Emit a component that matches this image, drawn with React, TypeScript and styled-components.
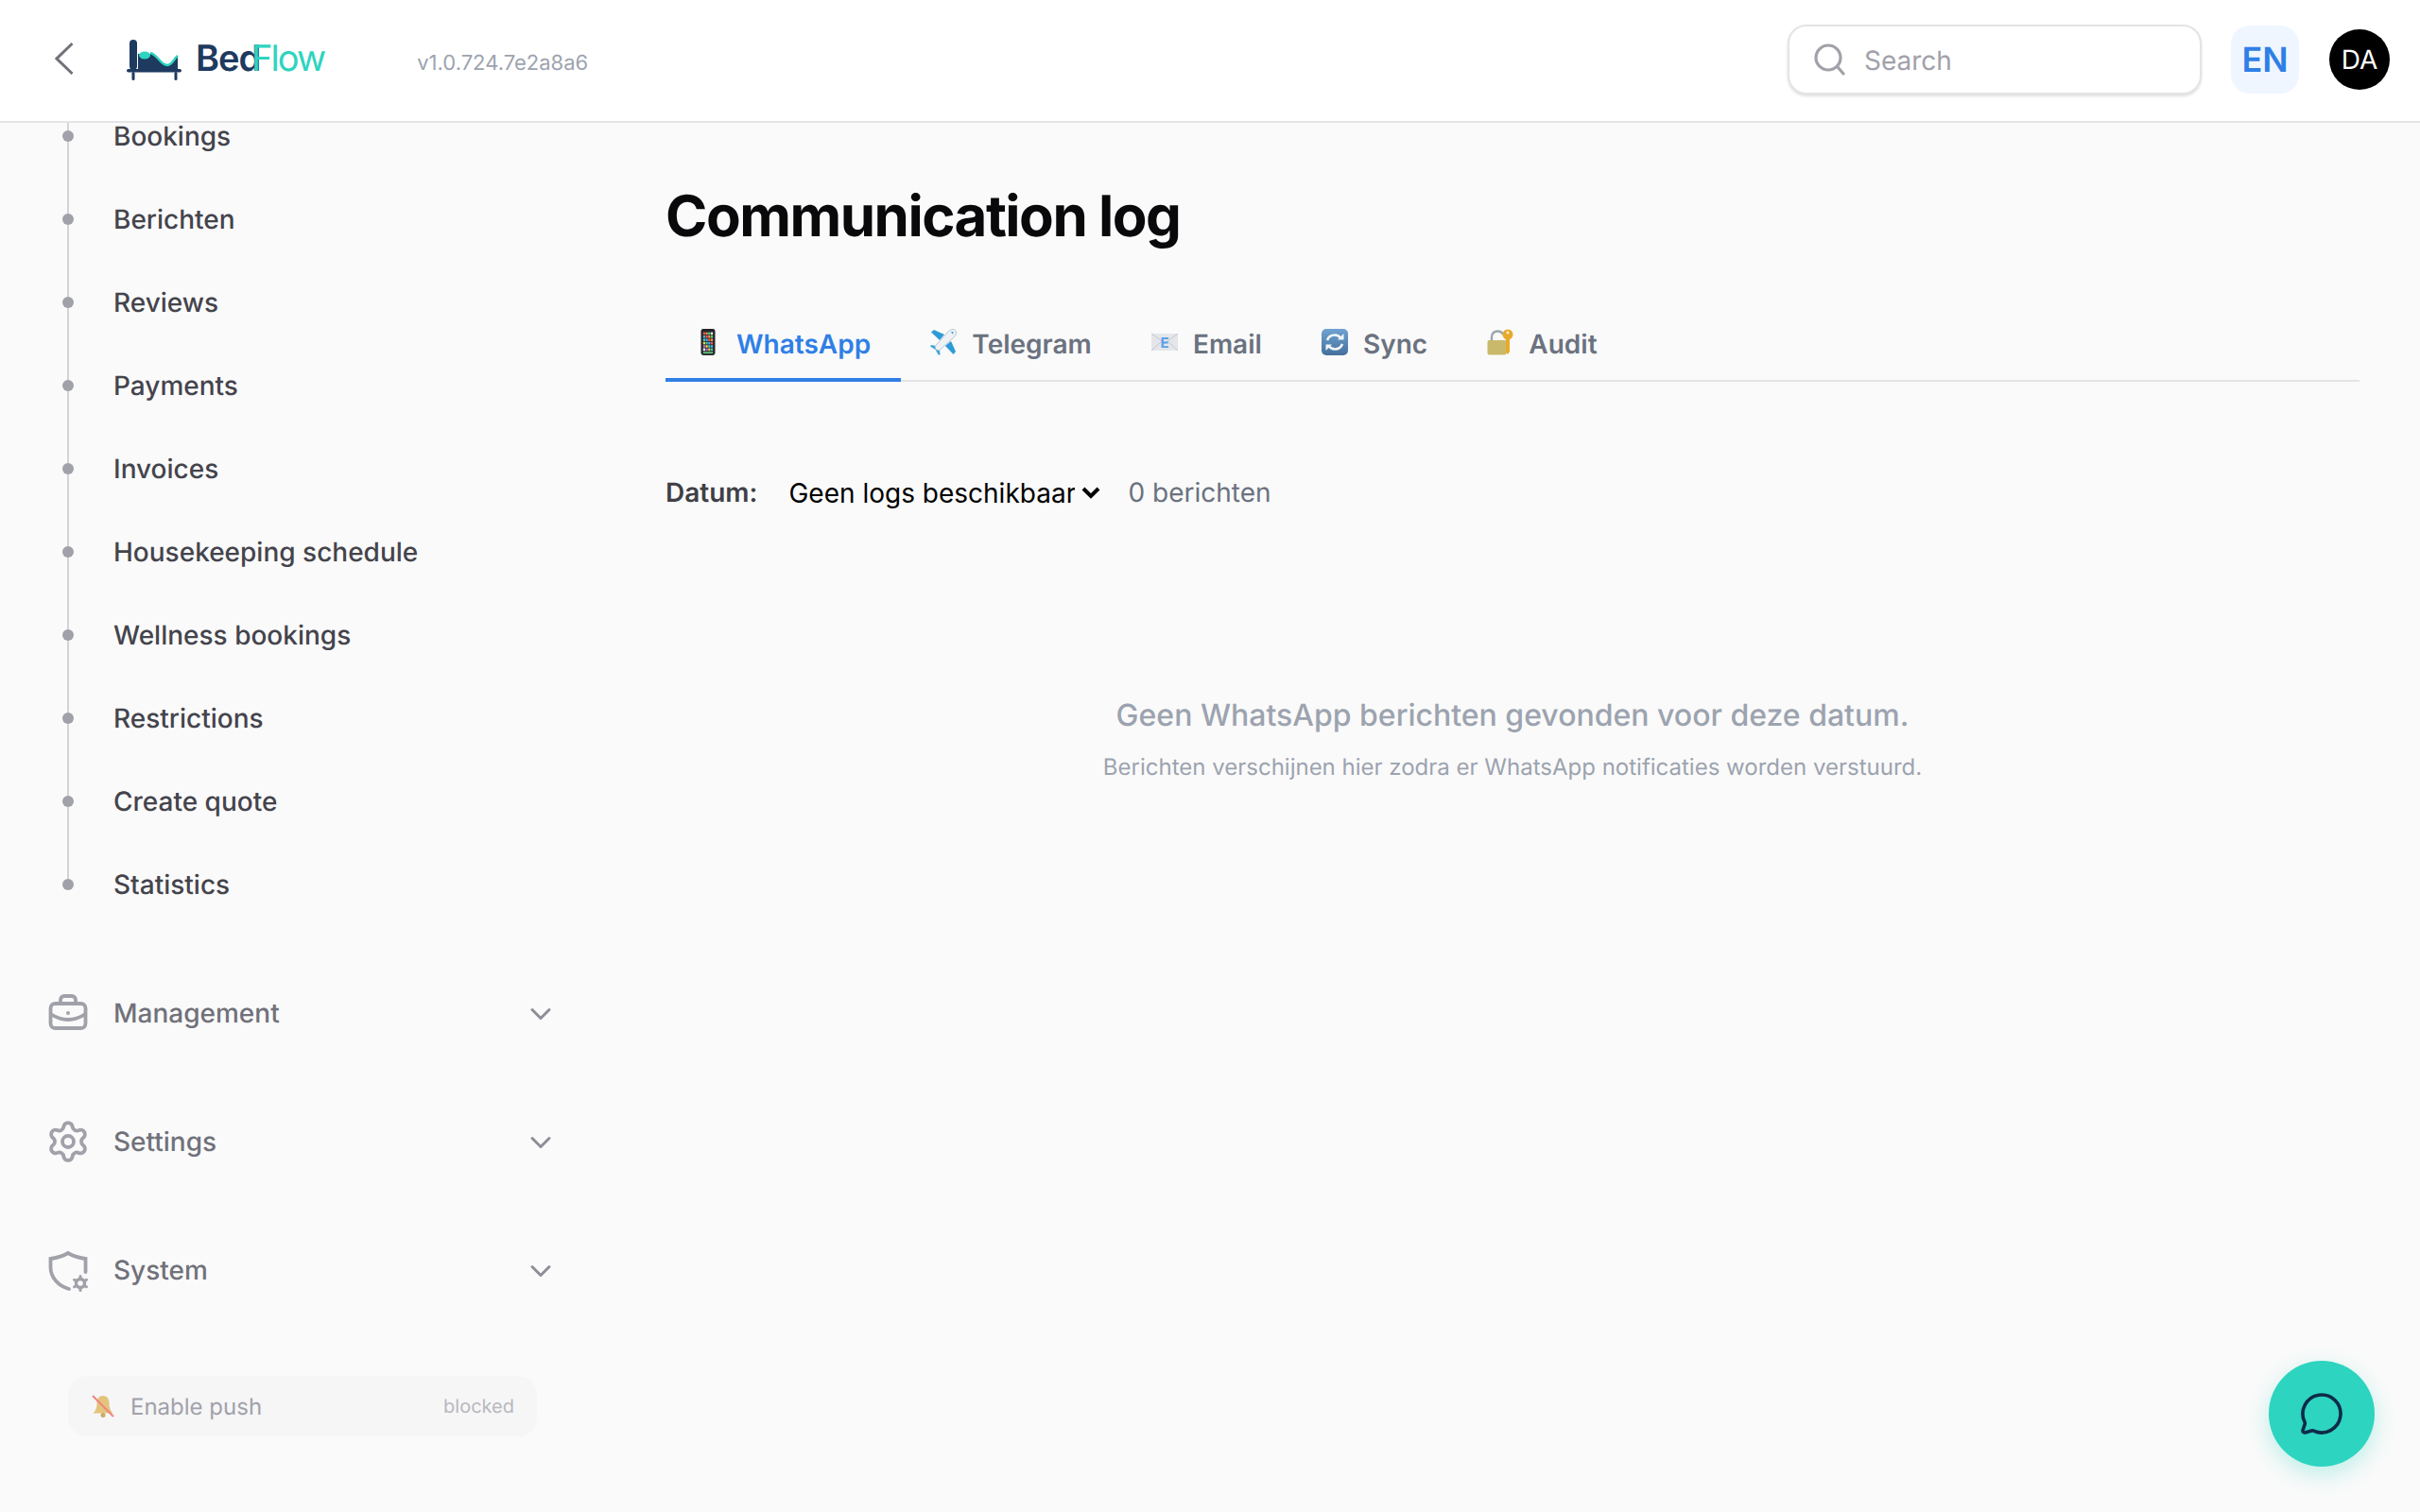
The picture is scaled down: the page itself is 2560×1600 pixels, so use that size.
import { ReactNode } from 'react'
import styled, { createGlobalStyle } from 'styled-components'
import { ChevronDown, MessageCircle, Settings } from 'lucide-react'

const GlobalStyle = createGlobalStyle`
  html, body {
    margin: 0;
    padding: 0;
    height: 1600px;
    overflow: hidden;
    background: #fafafa;
  }
  * {
    box-sizing: border-box;
  }
`

const Page = styled.div`
  width: 2560px;
  height: 1600px;
  display: flex;
  flex-direction: column;
  font-family: Inter, "Liberation Sans", sans-serif;
  text-rendering: geometricPrecision;
  background: #fafafa;
  overflow: hidden;
`

const Header = styled.header`
  height: 130px;
  flex-shrink: 0;
  display: flex;
  align-items: center;
  padding: 0 32px 2px 58px;
  background: #fff;
  border-bottom: 2px solid #e4e4e7;
  position: relative;
  z-index: 2;
`

const BackButton = styled.svg`
  width: 20px;
  height: 36px;
  margin-top: -2px;
  flex-shrink: 0;
`

const LogoMark = styled.svg`
  width: 58px;
  height: 43px;
  margin-left: 56px;
  margin-top: 1px;
  flex-shrink: 0;
`

const LogoText = styled.div`
  display: flex;
  margin-left: 15px;
  font-size: 38px;
  line-height: 44px;
  margin-top: -2px;
`

const LogoBed = styled.span`
  color: #1e3a5f;
  font-weight: 600;
  letter-spacing: -1px;
  width: 59px;
  overflow: visible;
`

const LogoFlow = styled.span`
  color: #2dd4bf;
  font-weight: 400;
  letter-spacing: -1.9px;
`

const Version = styled.span`
  margin-left: 98px;
  margin-top: 7px;
  font-size: 22px;
  color: #9ca3af;
`

const HeaderRight = styled.div`
  margin-left: auto;
  display: flex;
  align-items: center;
`

const SearchBox = styled.div`
  width: 438px;
  height: 74px;
  display: flex;
  align-items: center;
  gap: 19px;
  padding-left: 26px;
  background: #fff;
  border: 2px solid #e4e4e7;
  border-radius: 20px;
  box-shadow: 0 2px 3px rgba(0, 0, 0, 0.12);
`

const SearchIcon = styled.svg`
  width: 34px;
  height: 34px;
  flex-shrink: 0;
`

const SearchText = styled.span`
  font-size: 28px;
  color: #a1a1aa;
  margin-top: 1px;
`

const LangButton = styled.div`
  width: 72px;
  height: 72px;
  margin-left: 31px;
  display: flex;
  align-items: center;
  justify-content: center;
  border-radius: 20px;
  background: #eff6ff;
  color: #2f7fe6;
  font-size: 36px;
  font-weight: 600;
`

const Avatar = styled.div`
  width: 64px;
  height: 64px;
  margin-left: 32px;
  display: flex;
  align-items: center;
  justify-content: center;
  border-radius: 50%;
  background: #000;
  color: #fff;
  font-size: 28px;
`

const Body = styled.div`
  flex: 1;
  display: flex;
  min-height: 0;
`

const Sidebar = styled.aside`
  width: 640px;
  flex-shrink: 0;
  overflow: hidden;
`

const SubList = styled.div`
  margin-top: -30px;
  margin-bottom: 24px;
`

const SubItem = styled.div`
  height: 88px;
  display: flex;
  align-items: center;
  padding-left: 120px;
  position: relative;
  font-size: 28px;
  font-weight: 500;
  color: #44444c;

  &::before {
    content: '';
    position: absolute;
    left: 71px;
    top: 0;
    width: 2px;
    height: 100%;
    background: #d4d4d8;
  }

  &:last-child::before {
    height: 50%;
  }

  &::after {
    content: '';
    position: absolute;
    left: 66px;
    top: 38px;
    width: 12px;
    height: 12px;
    border-radius: 50%;
    background: #a1a1aa;
  }
`

const GroupRow = styled.div`
  height: 136px;
  display: flex;
  align-items: center;
  padding: 0 50px 0 48px;
  font-size: 28px;
  font-weight: 500;
  color: #71717a;
`

const GroupIcon = styled.span`
  width: 48px;
  height: 48px;
  display: flex;
  color: #a1a1aa;
  flex-shrink: 0;
`

const GroupLabel = styled.span`
  margin-left: 24px;
  flex: 1;
`

const GroupChevron = styled(ChevronDown)`
  margin-top: 2px;
  flex-shrink: 0;
`

const PushButton = styled.div`
  width: 496px;
  height: 64px;
  margin: 44px 0 0 72px;
  display: flex;
  align-items: center;
  padding: 0 24px;
  border-radius: 20px;
  background: #f6f6f7;
`

const PushLabel = styled.span`
  margin-left: 16px;
  font-size: 24px;
  color: #a1a1aa;
  flex: 1;
`

const PushState = styled.span`
  font-size: 20px;
  color: #b8b8be;
`

const Main = styled.main`
  flex: 1;
  padding: 63px 64px 0;
  min-width: 0;
`

const Title = styled.h1`
  margin: 0;
  font-size: 60px;
  line-height: 72px;
  font-weight: 700;
  letter-spacing: -1.5px;
  color: #09090b;
`

const Tabs = styled.div`
  margin-top: 59px;
  display: flex;
  border-bottom: 2px solid #e4e4e7;
`

const Tab = styled.div<{ $active?: boolean }>`
  height: 80px;
  margin-bottom: -2px;
  padding: 3px 32.2px 0 31px;
  display: flex;
  align-items: center;
  gap: 16px;
  font-size: 28px;
  font-weight: 600;
  color: ${props => (props.$active ? '#2f7fe6' : '#6b7280')};
  border-bottom: 4px solid ${props => (props.$active ? '#2f7fe6' : 'transparent')};
`

const TabIcon = styled.svg`
  width: 28px;
  height: 28px;
  margin-top: -3px;
  flex-shrink: 0;
`

const FilterRow = styled.div`
  margin-top: 95px;
  height: 44px;
  display: flex;
  align-items: center;
`

const FilterLabel = styled.label`
  font-size: 28px;
  font-weight: 600;
  color: #3f3f46;
`

const DateSelect = styled.select`
  appearance: none;
  border: none;
  background: transparent;
  margin: 2px 0 0 33px;
  padding: 0;
  width: 303px;
  font-family: inherit;
  font-size: 28px;
  color: #000;
`

const SelectArrow = styled.svg`
  width: 20px;
  height: 14px;
  margin-left: 7px;
  flex-shrink: 0;
`

const MessageCount = styled.span`
  margin-left: 29px;
  font-size: 28px;
  color: #6b7280;
`

const EmptyTitle = styled.div`
  margin-top: 190px;
  text-align: center;
  font-size: 32px;
  line-height: 48px;
  font-weight: 500;
  color: #9ca3af;
`

const EmptyText = styled.div`
  margin-top: 13px;
  text-align: center;
  font-size: 24px;
  line-height: 36px;
  color: #9ca3af;
`

const ChatButton = styled.button`
  position: fixed;
  left: 2400px;
  top: 1440px;
  width: 112px;
  height: 112px;
  border: none;
  padding: 0;
  display: flex;
  align-items: center;
  justify-content: center;
  border-radius: 50%;
  background: #2dd4bf;
  color: #0f2a4a;
  box-shadow: 0 8px 24px rgba(45, 212, 191, 0.3);
  z-index: 3;
`

const subItems = [
  'Bookings',
  'Berichten',
  'Reviews',
  'Payments',
  'Invoices',
  'Housekeeping schedule',
  'Wellness bookings',
  'Restrictions',
  'Create quote',
  'Statistics',
]

const phoneColors = ['#ef5a4c', '#f7d348', '#4ed47f', '#4aa8ee', '#b06ad0', '#f2934a', '#36cdb4', '#f4f6f8']

function BedLogo() {
  return (
    <LogoMark viewBox="0 0 58 43">
      <rect x="3" y="0" width="8" height="32" rx="4" fill="#1e3a5f" />
      <path d="M12 15H54V31H12Z" fill="#1e3a5f" />
      <path d="M24 10H54V16.5C50 19 48 26 43 26C36 26 33 17 24 14Z" fill="#fff" />
      <ellipse cx="19" cy="16.5" rx="6" ry="4" fill="#2dd4bf" />
      <path d="M25 14C33 16 36 27 43 27C48 27 50 20 54 17" fill="none" stroke="#2dd4bf" strokeWidth="2.4" />
      <rect x="0" y="31" width="58" height="3.4" rx="1.7" fill="#1e3a5f" />
      <rect x="5.5" y="34" width="3" height="9" rx="1.5" fill="#1e3a5f" />
      <rect x="50.5" y="34" width="3" height="9" rx="1.5" fill="#1e3a5f" />
    </LogoMark>
  )
}

function PhoneEmoji() {
  const cells: ReactNode[] = []
  for (let row = 0; row < 6; row++) {
    for (let col = 0; col < 4; col++) {
      cells.push(
        <rect
          key={`${row}-${col}`}
          x={8.8 + col * 2.7}
          y={3.6 + row * 3.4}
          width="2.2"
          height="2.6"
          fill={phoneColors[(row * 3 + col * 5) % phoneColors.length]}
        />,
      )
    }
  }
  return (
    <TabIcon viewBox="0 0 28 28">
      <rect x="6.5" y="0" width="15" height="28" rx="2.4" fill="#26262a" />
      {cells}
      <rect x="8.8" y="24.2" width="10.4" height="2" fill="#5fb878" />
    </TabIcon>
  )
}

function PlaneEmoji() {
  return (
    <TabIcon viewBox="0 0 28 28">
      <path d="M15 6L4 1 1 3.500 10 12Z" fill="#2f9bd6" />
      <path d="M22 13L27 24 24.500 27 16 18Z" fill="#2f9bd6" />
      <path d="M6 18L1 17 0 18.500 5.500 22 9 28 10.500 27 10 22Z" fill="#3aa5db" />
      <path d="M26.500 1.500C24.500-.5 21.500.5 19 3L5 18.500 6 22 9.500 23 25 9C27.500 6.500 28.500 3.500 26.500 1.500Z" fill="#eef2f5" stroke="#9fb0bf" strokeWidth=".7" />
      <path d="M24.500 3L21.800 3.200 24.200 5.800Z" fill="#2f9bd6" />
    </TabIcon>
  )
}

function MailEmoji() {
  return (
    <TabIcon viewBox="0 0 28 28">
      <rect x="0" y="5" width="28" height="18" fill="#e4e6ea" />
      <path d="M0 5L14 15 28 5M0 23L11 13M28 23L17 13" fill="none" stroke="#c3c7cd" strokeWidth="1" />
      <text x="14" y="20" textAnchor="middle" fontSize="15" fontWeight="700" fill="#5aa2ea" fontFamily="Inter, sans-serif">E</text>
    </TabIcon>
  )
}

function SyncEmoji() {
  return (
    <TabIcon viewBox="0 0 28 28">
      <defs>
        <linearGradient id="syncFill" x1="0" y1="0" x2="0" y2="1">
          <stop offset="0" stopColor="#6fa3d2" />
          <stop offset="1" stopColor="#44709c" />
        </linearGradient>
      </defs>
      <rect x="0" y="0" width="28" height="28" rx="5" fill="url(#syncFill)" />
      <path d="M6 12C7.500 8 10.500 6.500 14 6.500C17 6.500 19 8 20.500 10" fill="none" stroke="#f2f5f8" strokeWidth="2.6" />
      <path d="M17 11.500H23.500V5Z" fill="#f2f5f8" />
      <path d="M22 16C20.500 20 17.500 21.500 14 21.500C11 21.500 9 20 7.500 18" fill="none" stroke="#f2f5f8" strokeWidth="2.6" />
      <path d="M11 16.500H4.500V23Z" fill="#f2f5f8" />
    </TabIcon>
  )
}

function LockEmoji() {
  return (
    <TabIcon viewBox="0 0 28 28">
      <path d="M5 13V8.500C5 4.500 8 2.500 11 2.500C14 2.500 16 3.500 17 6" fill="none" stroke="#9aa4ad" strokeWidth="2.4" />
      <rect x="0.500" y="12" width="20" height="15.500" rx="2" fill="#c9b96a" />
      <circle cx="22" cy="6" r="5.500" fill="#e9a92c" />
      <circle cx="22" cy="4" r="1.400" fill="#fbf4dc" />
      <path d="M20 10H24V24L22 27 20 25Z" fill="#e9a92c" />
    </TabIcon>
  )
}

function BellEmoji() {
  return (
    <svg width="26" height="26" viewBox="0 0 26 26">
      <g opacity="0.7">
        <path d="M13 2C8 2 6.500 6 6.500 10C6.500 15 5 18 2.500 20.500H23.500C21 18 19.500 15 19.500 10C19.500 6 18 2 13 2Z" fill="#dbb04a" />
        <circle cx="13" cy="22.500" r="2.500" fill="#b98a2c" />
        <path d="M2 2L24 24" stroke="#ef5350" strokeWidth="2" />
      </g>
    </svg>
  )
}

function BriefcaseIcon() {
  return (
    <svg width="48" height="48" viewBox="0 0 48 48" fill="none" stroke="currentColor" strokeWidth="3.8">
      <rect x="5.500" y="14" width="37" height="26" rx="5" />
      <path d="M16 14V10A4 4 0 0 1 20 6H28A4 4 0 0 1 32 10V14" />
      <path d="M5.500 25Q24 37 42.500 25" />
      <circle cx="24" cy="24" r="2" fill="currentColor" stroke="none" />
    </svg>
  )
}

function ShieldGearIcon() {
  const teeth = [0, 60, 120, 180, 240, 300]
  return (
    <svg width="48" height="48" viewBox="0 0 48 48" fill="none" stroke="currentColor" strokeWidth="3.8" strokeLinecap="round">
      <path d="M42.500 26V12C36 11 29 9 24 6C19 9 12 11 5.500 12V21C5.500 32 14 41 25 44" />
      <circle cx="37" cy="38" r="4.500" strokeWidth="3.400" />
      {teeth.map(angle => (
        <path key={angle} d="M37 30.500V32.500" strokeWidth="3" transform={`rotate(${angle} 37 38)`} />
      ))}
    </svg>
  )
}

const tabs = [
  { label: 'WhatsApp', icon: <PhoneEmoji />, active: true },
  { label: 'Telegram', icon: <PlaneEmoji /> },
  { label: 'Email', icon: <MailEmoji /> },
  { label: 'Sync', icon: <SyncEmoji /> },
  { label: 'Audit', icon: <LockEmoji /> },
]

const groups = [
  { label: 'Management', icon: <BriefcaseIcon /> },
  { label: 'Settings', icon: <Settings size={48} strokeWidth={1.9} /> },
  { label: 'System', icon: <ShieldGearIcon /> },
]

export default function App() {
  return (
    <Page>
      <GlobalStyle />
      <Header>
        <BackButton viewBox="0 0 20 36" fill="none" stroke="#71717a" strokeWidth="3">
          <path d="M18.500 2L2 18L18.500 34" />
        </BackButton>
        <BedLogo />
        <LogoText>
          <LogoBed>Bed</LogoBed>
          <LogoFlow>Flow</LogoFlow>
        </LogoText>
        <Version>v1.0.724.7e2a8a6</Version>
        <HeaderRight>
          <SearchBox>
            <SearchIcon viewBox="0 0 34 34" fill="none" stroke="#a1a1aa" strokeWidth="3.200" strokeLinecap="round">
              <circle cx="15" cy="15" r="13" />
              <path d="M25 25L31 32" />
            </SearchIcon>
            <SearchText>Search</SearchText>
          </SearchBox>
          <LangButton>EN</LangButton>
          <Avatar>DA</Avatar>
        </HeaderRight>
      </Header>
      <Body>
        <Sidebar>
          <SubList>
            {subItems.map(item => (
              <SubItem key={item}>{item}</SubItem>
            ))}
          </SubList>
          {groups.map(group => (
            <GroupRow key={group.label}>
              <GroupIcon>{group.icon}</GroupIcon>
              <GroupLabel>{group.label}</GroupLabel>
              <GroupChevron size={36} strokeWidth={2} color="#8e8e96" />
            </GroupRow>
          ))}
          <PushButton>
            <BellEmoji />
            <PushLabel>Enable push</PushLabel>
            <PushState>blocked</PushState>
          </PushButton>
        </Sidebar>
        <Main>
          <Title>Communication log</Title>
          <Tabs>
            {tabs.map(tab => (
              <Tab key={tab.label} $active={tab.active}>
                {tab.icon}
                {tab.label}
              </Tab>
            ))}
          </Tabs>
          <FilterRow>
            <FilterLabel>Datum:</FilterLabel>
            <DateSelect defaultValue="">
              <option value="">Geen logs beschikbaar</option>
            </DateSelect>
            <SelectArrow viewBox="0 0 20 14" fill="none" stroke="#000" strokeWidth="4">
              <path d="M2 3L10 11L18 3" />
            </SelectArrow>
            <MessageCount>0 berichten</MessageCount>
          </FilterRow>
          <EmptyTitle>Geen WhatsApp berichten gevonden voor deze datum.</EmptyTitle>
          <EmptyText>Berichten verschijnen hier zodra er WhatsApp notificaties worden verstuurd.</EmptyText>
        </Main>
      </Body>
      <ChatButton>
        <MessageCircle size={48} strokeWidth={1.8} />
      </ChatButton>
    </Page>
  )
}
